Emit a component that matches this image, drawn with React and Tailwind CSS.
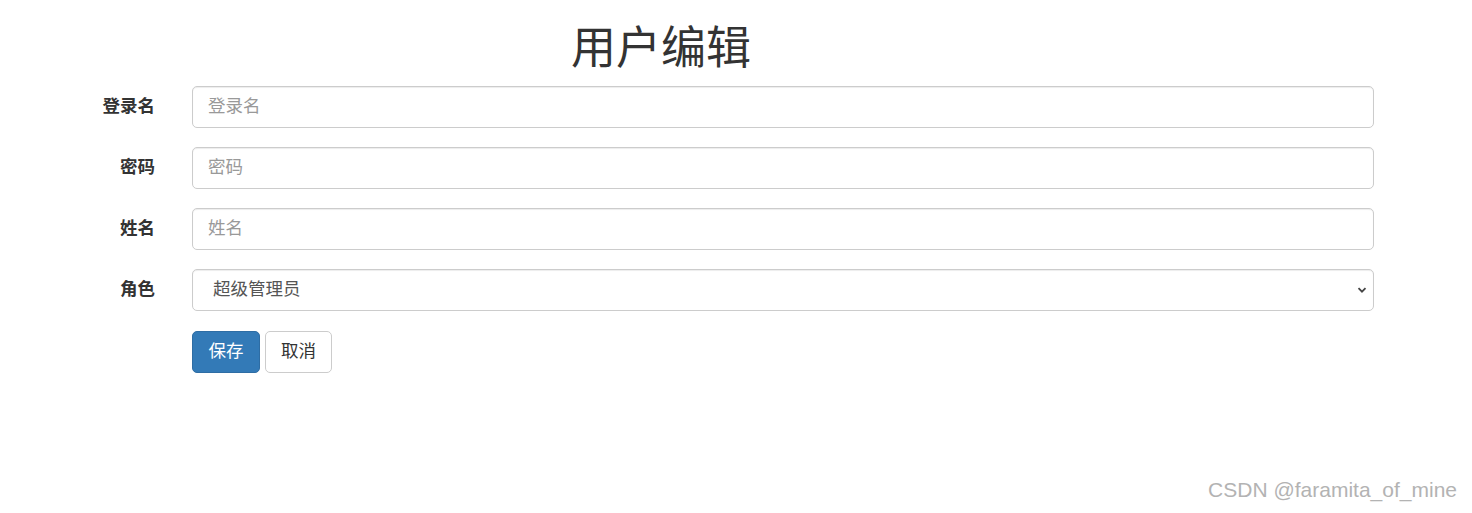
import { useState } from "react";

const fields = [
  { label: "登录名", placeholder: "登录名" },
  { label: "密码", placeholder: "密码" },
  { label: "姓名", placeholder: "姓名" },
];

const App = () => {
  const [role, setRole] = useState("超级管理员");

  return (
    <div className="relative min-h-screen bg-white text-[#333] font-['Liberation_Sans','Noto_Sans_CJK_SC',sans-serif]">
      {/* Title */}
      <div className="w-[1322px] pt-[24px] text-center">
        <h1 className="text-[45px] leading-[1.1] font-normal text-[#333]">用户编辑</h1>
      </div>

      {/* Form */}
      <form className="mt-[12px] flex flex-col">
        {fields.map((f) => (
          <div key={f.label} className="mb-[19px] flex items-center">
            <label className="w-[155px] text-right text-[17.5px] font-bold">{f.label}</label>
            <input
              placeholder={f.placeholder}
              className="ml-[37px] h-[42px] w-[1182px] rounded-[5px] border border-[#ccc] px-[15px] text-[17.5px] text-[#555] placeholder:text-[#999] shadow-[inset_0_1px_1px_rgba(0,0,0,0.075)] outline-none"
            />
          </div>
        ))}

        <div className="mb-[20px] flex items-center">
          <label className="w-[155px] text-right text-[17.5px] font-bold">角色</label>
          <div className="relative ml-[37px] w-[1182px]">
            <select
              value={role}
              onChange={(e) => setRole(e.target.value)}
              className="h-[42px] w-full appearance-none rounded-[5px] border border-[#ccc] bg-white pl-[20px] pr-[30px] text-[17.5px] text-[#555] shadow-[inset_0_1px_1px_rgba(0,0,0,0.075)] outline-none"
            >
              <option>超级管理员</option>
              <option>管理员</option>
              <option>普通用户</option>
            </select>
            <svg
              className="pointer-events-none absolute right-[7px] top-[16px] h-[10px] w-[10px]"
              viewBox="0 0 10 10"
              fill="none"
              stroke="#444"
              strokeWidth="1.8"
            >
              <path d="M1.5 3.2 L5 6.7 L8.5 3.2" />
            </svg>
          </div>
        </div>

        <div className="flex items-center gap-[5px] pl-[192px]">
          <button
            type="button"
            className="h-[42px] w-[68px] rounded-[5px] border border-[#2e6da4] bg-[#337ab7] text-[17.5px] text-white"
          >
            保存
          </button>
          <button
            type="button"
            className="h-[42px] w-[67px] rounded-[5px] border border-[#ccc] bg-white text-[17.5px] text-[#333]"
          >
            取消
          </button>
        </div>
      </form>

      {/* Watermark */}
      <div className="absolute right-[15px] top-[479px] text-[21px] leading-none text-[#b3b3b3] font-['Liberation_Sans',sans-serif]">
        CSDN @faramita_of_mine
      </div>
    </div>
  );
};

export default App;
